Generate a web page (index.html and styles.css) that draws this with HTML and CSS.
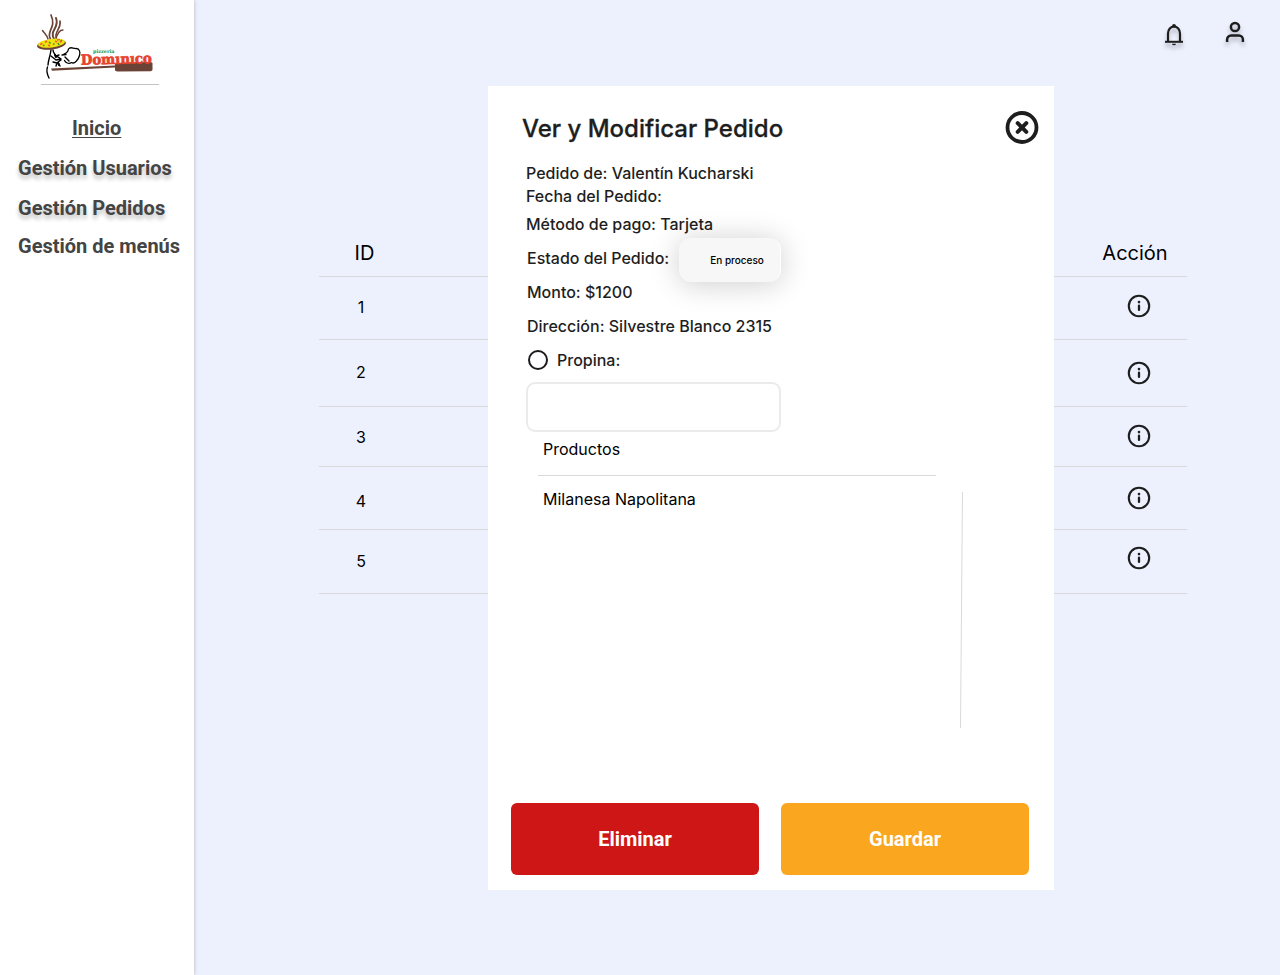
FILE: index.html
```html
<!DOCTYPE html>
<html lang="es">
<head>
<meta charset="utf-8">
<title>Pizzería Dominico - Gestión Pedidos</title>
<link rel="stylesheet" href="styles.css">
</head>
<body>
<svg class="sprite" width="0" height="0">
  <symbol id="info" viewBox="0 0 24 24"><circle cx="12" cy="12" r="10.2" fill="none" stroke="currentColor" stroke-width="2.1"/><path d="M12 11.7v4.2" stroke="currentColor" stroke-width="2.3" stroke-linecap="round"/><circle cx="12" cy="8.1" r="1.3" fill="currentColor"/></symbol>
</svg>
<div class="app">
  <aside class="sidebar">
    <div class="brand">
      <svg class="logo" viewBox="0 0 122 70" width="122" height="70">
        <g fill="none" stroke="#6b4236" stroke-linecap="round">
          <path d="M12 30c-1-4-3-5-5.500-8.500" stroke-width="1.500"/>
          <path d="M14.500 30c-5-8 6.500-11 .5-24" stroke-width="1.700"/>
          <path d="M18 30c-5-9 6-11 2-21" stroke-width="2"/>
          <path d="M20.500 30c-3-8 5-9 3.500-18" stroke-width="1.600"/>
          <path d="M20 30c1-4 3-9 7-9" stroke-width="1.300"/>
        </g>
        <ellipse cx="15.500" cy="35.500" rx="14.500" ry="5" fill="#6b4236" transform="rotate(-7 15.500 35.500)"/>
        <ellipse cx="15.500" cy="34.200" rx="13.500" ry="4.300" fill="#f1e30c" transform="rotate(-7 15.500 34.200)"/>
        <path d="M4 35.500l2.500-1M9 33.500l2-1.500M12 36l2 1M19 32l2 1M24 33.500l1.500-2M21 31l3-.5" stroke="#f0662a" stroke-width="1.600"/>
        <path d="M7 36l1.500 1M13 33l1.500 1.500M17 35.500l1.500-1M22 34l1 2M26 31l-1 1" stroke="#3f8c31" stroke-width="1.500"/>
        <g fill="none" stroke="#000" stroke-linecap="round" stroke-linejoin="round">
          <path d="M15 41c-1 7-3 11-3 15M11.500 58c-1.500 4-.5 7 1.500 11" stroke-width="1.400"/>
          <path d="M28 45c3-1 4-2 4.500-5 2-3 5 0 8-.5 3 0 4 4 3 7-1 4-5 9-8 7-3 2-6 0-7-2" stroke-width="1.300"/>
          <path d="M17 41c0 3 2 4 3 6l3-1M15 47l5 4 5-1M20 47c2 1 4 1 5 4l-3 2 2 4M26 46l4-.5M29 48l4 4M17 53l4 1-1 3" stroke-width="1.400"/>
          <path d="M19 46l1 2M22 54l1 2" stroke-width="2"/>
        </g>
        <path d="M15 59.500L79 56.500v2L16 61.800z" fill="#6b4236"/>
        <path d="M79 55q3-1.500 6-1 15-1 30-1l1.500 1v7l-1.500 1.300-34 .2-2-1z" fill="#6b4236"/>
        <text x="57" y="43.800" class="logo-small" textLength="21.500" lengthAdjust="spacingAndGlyphs">pizzeria</text>
        <text x="45" y="55.800" class="logo-name" transform="rotate(-1.500 45 55.800)" textLength="71" lengthAdjust="spacingAndGlyphs">Domınıco</text>
      </svg>
    </div>
    <nav class="nav">
      <a class="nav-home">Inicio</a>
      <a class="nav-link shaded">Gestión Usuarios</a>
      <a class="nav-link shaded">Gestión Pedidos</a>
      <a class="nav-link last">Gestión de menús</a>
    </nav>
  </aside>
  <main class="main">
    <header class="topbar">
      <svg class="bell" width="20" height="24" viewBox="0 0 20 24"><path d="M1 18.800h18" stroke="currentColor" stroke-width="2" stroke-linecap="butt"/><path d="M4 18.500v-8a6 7 0 0 1 12 0v8" fill="none" stroke="currentColor" stroke-width="2.200"/><circle cx="10" cy="2.800" r="1.900" fill="currentColor"/><path d="M8 20.700h4a2 1.600 0 0 1-4 0z" fill="currentColor"/></svg>
      <svg class="user" width="20" height="22" viewBox="0 0 20 22"><circle cx="10" cy="6" r="4.100" fill="none" stroke="currentColor" stroke-width="2.500"/><path d="M2.100 21v-2.500a4 4 0 0 1 4-4h7.800a4 4 0 0 1 4 4V21" fill="none" stroke="currentColor" stroke-width="2.500"/></svg>
    </header>
    <section class="orders">
      <div class="row head"><span class="id">ID</span><span class="action">Acción</span></div>
      <div class="row r1"><span class="id">1</span><svg class="info"><use href="#info"/></svg></div>
      <div class="row r2"><span class="id">2</span><svg class="info"><use href="#info"/></svg></div>
      <div class="row r3"><span class="id">3</span><svg class="info"><use href="#info"/></svg></div>
      <div class="row r4"><span class="id">4</span><svg class="info"><use href="#info"/></svg></div>
      <div class="row r5"><span class="id">5</span><svg class="info"><use href="#info"/></svg></div>
    </section>
  </main>
  <div class="modal">
    <div class="modal-head">
      <h1 class="title">Ver y Modificar Pedido</h1>
      <svg class="close" width="34" height="34" viewBox="0 0 34 34"><circle cx="17" cy="16.500" r="14.500" fill="none" stroke="currentColor" stroke-width="3.800"/><path d="M12.700 12.200l8.600 8.600M21.300 12.200l-8.600 8.600" stroke="currentColor" stroke-width="4" stroke-linecap="round"/></svg>
    </div>
    <div class="details">
      <p class="field">Pedido de: Valentín Kucharski</p>
      <p class="field">Fecha del Pedido:</p>
      <p class="field pay">Método de pago: Tarjeta</p>
      <div class="field spaced status">Estado del Pedido:<span class="pill">En proceso</span></div>
      <p class="field spaced">Monto: $1200</p>
      <p class="field spaced">Dirección: Silvestre Blanco 2315</p>
      <label class="field spaced tip"><span class="radio"></span>Propina:</label>
      <div class="tip-input"></div>
    </div>
    <div class="products">
      <div class="product-list">
        <div class="product-head">Productos</div>
        <div class="product">Milanesa Napolitana</div>
      </div>
      <svg class="scroll" width="4" height="236" viewBox="0 0 4 236"><path d="M2.500 0L.5 236" stroke="#d9d9d9" stroke-width="1"/></svg>
    </div>
    <div class="buttons">
      <button class="btn delete">Eliminar</button>
      <button class="btn save">Guardar</button>
    </div>
  </div>
</div>
</body>
</html>
```
FILE: styles.css
```css
* { box-sizing: border-box; }
body { margin: 0; font-family: Inter, sans-serif; color: #1e1e1e; }
p, h1 { margin: 0; }
.sprite { position: absolute; }
.app { position: relative; display: flex; width: 1280px; height: 975px; background: #edf1fe; overflow: hidden; }

.sidebar { width: 194px; background: #fff; box-shadow: 0 0 4px rgba(0, 0, 0, .25); }
.brand { width: 118px; height: 85px; margin-left: 41px; padding-top: 9px; border-bottom: 1px solid #c4c4c4; }
.logo { display: block; margin-left: -5px; }
.logo-small { font: bold 5px "DejaVu Serif", serif; fill: #23913a; }
.logo-name { font: bold 14px "DejaVu Serif", serif; fill: #e6432a; stroke: #e6432a; stroke-width: .7px; }
.nav { display: flex; flex-direction: column; padding: 31px 0 0 18px; font: bold 20px/24px Roboto, sans-serif; color: #444; white-space: nowrap; }
.nav-home { margin-left: 54px; text-decoration: underline; text-decoration-thickness: 1px; text-underline-offset: 2px; }
.nav-link { margin-top: 16px; }
.nav-link.last { margin-top: 14px; }
.shaded { text-shadow: 0 4px 4px rgba(0, 0, 0, .25); }

.main { flex: 1; padding: 22px 35px 0 125px; }
.topbar { display: flex; justify-content: flex-end; gap: 41px; height: 208px; }
.bell { margin-top: 1px; }
.user { margin-top: -1px; }
.bell, .user { filter: drop-shadow(0 4px 2px rgba(0, 0, 0, .25)); }
.orders { width: 868px; font-size: 16px; line-height: 20px; color: #000; }
.row { display: flex; justify-content: space-between; align-items: flex-start; border-bottom: 1px solid #d9d9d9; }
.head { height: 47px; padding-top: 13px; font-size: 20px; }
.id { width: 84px; text-align: center; }
.head .id { width: 91px; }
.action { width: 104px; text-align: center; }
.info { width: 24px; height: 24px; margin-right: 36px; color: #1e1e1e; }
.r1 { height: 63px; padding-top: 20px; }
.r1 .info { margin-top: -3px; }
.r2 { height: 67px; padding-top: 22px; }
.r2 .info { margin-top: -1px; }
.r3 { height: 60px; padding-top: 20px; }
.r3 .info { margin-top: -3px; }
.r4 { height: 63px; padding-top: 24px; }
.r4 .info { margin-top: -5px; }
.r5 { height: 64px; padding-top: 21px; }
.r5 .info { margin-top: -5px; }

.modal { position: absolute; left: 488px; top: 86px; width: 566px; height: 804px; display: flex; flex-direction: column; background: #fff; padding: 25px 25px 15px 23px; }
.modal-head { display: flex; justify-content: space-between; height: 51px; margin: 0 -10px 0 11px; }
.title { font-size: 24px; font-weight: 500; line-height: 35px; white-space: nowrap; -webkit-text-stroke: .3px #1e1e1e; }
.details { display: flex; flex-direction: column; padding-left: 15px; }
.field { font-size: 16px; font-weight: 500; line-height: 23px; white-space: nowrap; }
.pay { margin-top: 5px; }
.spaced { margin-top: 11px; padding-left: 1px; }
.status { display: flex; align-items: center; gap: 10px; height: 23px; }
.pill { width: 102px; height: 44px; margin-top: 2px; padding-left: 31px; border-radius: 12px; background: #f7f7f7; box-shadow: inset -2px 0 0 -1px #fff, 0 2px 30px rgba(0, 0, 0, .2); font-size: 10px; line-height: 45px; color: #000; }
.tip { display: flex; align-items: center; gap: 9px; padding-left: 2px; }
.radio { width: 20px; height: 20px; margin-bottom: 2px; border: 2px solid #1d1b20; border-radius: 50%; }
.tip-input { width: 255px; height: 50px; margin-top: 10px; border: 2px solid #ebebeb; border-radius: 9px; }
.products { display: flex; align-items: flex-end; gap: 24px; height: 296px; padding-left: 27px; color: #000; }
.product-list { align-self: flex-start; width: 398px; }
.product-head { height: 44px; padding: 6px 5px 0; border-bottom: 1px solid #d9d9d9; line-height: 23px; }
.product { padding: 12px 5px 0; line-height: 23px; }
.buttons { display: flex; gap: 22px; margin-top: auto; }
.btn { width: 248px; height: 72px; padding: 0; border: 0; border-radius: 6px; font: bold 20px Roboto, sans-serif; color: #fff; }
.delete { background: #cf1616; }
.save { background: #faa61e; }
```
